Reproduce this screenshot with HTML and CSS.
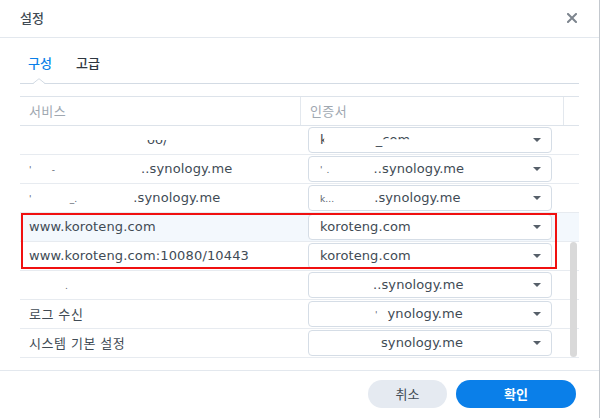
FILE: index.html
```html
<!DOCTYPE html>
<html lang="ko">
<head>
<meta charset="utf-8">
<title>설정</title>
<link rel="stylesheet" href="styles.css">
</head>
<body>
<div class="dialog">
  <div class="head">
    <span class="title">설정</span>
    <svg class="close" width="10" height="10" viewBox="0 0 10 10"><path d="M1 1 L9 9 M9 1 L1 9" stroke="#7d858e" stroke-width="2" stroke-linecap="square" fill="none"/></svg>
  </div>
  <div class="body">
    <div class="tabs">
      <span class="tab active">구성</span>
      <span class="tab">고급</span>
      <svg class="caret" width="12" height="6" viewBox="0 0 12 6"><path d="M0 6 L6 0.7 L12 6 Z" fill="#fff"/><path d="M0 5.5 L6 0.7 L12 5.5" fill="none" stroke="#d3dbe4" stroke-width="1"/></svg>
    </div>
    <div class="grid">
      <div class="ghead">
        <div class="hc1">서비스</div>
        <div class="hc2">인증서</div>
        <div class="hc3"></div>
      </div>
      <div class="rows">
        <div class="row">
          <div class="c1"><span class="frag clip-top m118">oo/</span></div>
          <div class="c2"><div class="sel"><span class="val"><span class="clip-l">k</span><span class="m48">_</span><span class="clip-bot">com</span></span><i class="arrow"></i></div></div>
          <div class="c3"></div>
        </div>
        <div class="row">
          <div class="c1"><span class="tiny">'</span><span class="tiny m20">-</span><span class="m86">..synology.me</span></div>
          <div class="c2"><div class="sel"><span class="val"><span class="tiny">'</span><span class="tiny m4">.</span><span class="m44">..synology.me</span></span><i class="arrow"></i></div></div>
          <div class="c3"></div>
        </div>
        <div class="row">
          <div class="c1"><span class="tiny">'</span><span class="tiny m38">_.</span><span class="m56">.synology.me</span></div>
          <div class="c2"><div class="sel"><span class="val"><span class="tiny">k...</span><span class="m40">.synology.me</span></span><i class="arrow"></i></div></div>
          <div class="c3"></div>
        </div>
        <div class="row hl">
          <div class="c1">www.koroteng.com</div>
          <div class="c2"><div class="sel"><span class="val">koroteng.com</span><i class="arrow"></i></div></div>
          <div class="c3"></div>
        </div>
        <div class="row">
          <div class="c1">www.koroteng.com:10080/10443</div>
          <div class="c2"><div class="sel"><span class="val">koroteng.com</span><i class="arrow"></i></div></div>
          <div class="c3"></div>
        </div>
        <div class="row">
          <div class="c1"><span class="tiny m36">.</span></div>
          <div class="c2"><div class="sel"><span class="val"><span class="m53">..synology.me</span></span><i class="arrow"></i></div></div>
          <div class="c3"></div>
        </div>
        <div class="row">
          <div class="c1 ko">로그 수신</div>
          <div class="c2"><div class="sel"><span class="val"><span class="tiny m55">'</span><span class="m10">ynology.me</span></span><i class="arrow"></i></div></div>
          <div class="c3"></div>
        </div>
        <div class="row">
          <div class="c1 ko">시스템 기본 설정</div>
          <div class="c2"><div class="sel"><span class="val"><span class="m61">synology.me</span></span><i class="arrow"></i></div></div>
          <div class="c3"></div>
        </div>
        <div class="scrollbar"></div>
      </div>
      <div class="redbox"></div>
    </div>
  </div>
  <div class="foot">
    <button class="btn cancel">취소</button>
    <button class="btn ok">확인</button>
  </div>
</div>
</body>
</html>
```
FILE: styles.css
```css
* { box-sizing: border-box; }
html, body { margin: 0; padding: 0; background: #fff; }
body {
  width: 601px;
  height: 418px;
  overflow: hidden;
  font-family: "DejaVu Sans", "Noto Sans CJK KR", sans-serif;
  font-size: 13px;
  color: #414b55;
}
.dialog {
  width: 600px;
  height: 418px;
  border-right: 1px solid #c3c8ce;
  display: flex;
  flex-direction: column;
}
.head {
  height: 38px;
  border-bottom: 1px solid #e3e8ee;
  display: flex;
  align-items: center;
  justify-content: space-between;
  padding: 0 22px 1px 20px;
}
.title {
  font-family: "Noto Sans CJK KR", sans-serif;
  font-size: 13px;
  font-weight: 500;
  line-height: 18px;
  color: #414b55;
}
.close { display: block; }
.body { padding: 0 20px; }
.tabs {
  position: relative;
  height: 46px;
  border-bottom: 1px solid #d3dbe4;
  display: flex;
  gap: 24px;
  padding: 15px 0 0 8px;
  margin-bottom: 12px;
}
.tab {
  font-family: "Noto Sans CJK KR", sans-serif;
  font-size: 13px;
  font-weight: 500;
  line-height: 20px;
  color: #2e3740;
}
.tab.active { color: #0a7fe9; }
.caret {
  position: absolute;
  left: 13px;
  bottom: -1px;
  display: block;
}
.grid { position: relative; }
.ghead {
  display: grid;
  grid-template-columns: 280px 263px 17px;
  height: 30px;
  border-top: 1px solid #dde3ea;
  border-bottom: 1px solid #dde3ea;
  font-family: "Noto Sans CJK KR", sans-serif;
  color: #a0a8b1;
  line-height: 28px;
  letter-spacing: 0.4px;
}
.hc1 { padding-left: 9px; }
.hc2 { padding-left: 9px; border-left: 1px solid #e3e8ee; }
.hc3 { border-left: 1px solid #e3e8ee; }
.rows { position: relative; }
.row {
  display: grid;
  grid-template-columns: 280px 263px 17px;
  height: 29px;
  border-bottom: 1px solid #e7ebf0;
  align-items: center;
}
.row.hl { background: #f3f8fd; }
.c1 {
  padding-left: 9px;
  white-space: nowrap;
  line-height: 16px;
  letter-spacing: 0.15px;
}
.c1.ko { font-family: "Noto Sans CJK KR", sans-serif; letter-spacing: 0.6px; }
.c2 { padding-left: 8px; }
.sel {
  width: 244px;
  height: 26px;
  border: 1px solid #d5dde6;
  border-radius: 4px;
  background: #fff;
  display: flex;
  align-items: center;
  justify-content: space-between;
  padding: 0 10px 0 11px;
}
.val { white-space: nowrap; line-height: 16px; letter-spacing: 0.1px; }
.arrow {
  display: block;
  width: 0;
  height: 0;
  border-left: 4px solid transparent;
  border-right: 4px solid transparent;
  border-top: 4px solid #565f69;
  margin-top: -1px;
}
.frag, .clip-bot, .clip-l { display: inline-block; }
.clip-top { clip-path: inset(50% 0 0 0); }
.clip-bot { clip-path: inset(0 0 55% 0); }
.clip-l { clip-path: inset(0 45% 0 0); }
.tiny { font-size: 9px; color: #5a636d; }
.m4 { margin-left: 4px; }
.m10 { margin-left: 10px; }
.m20 { margin-left: 20px; }
.m36 { margin-left: 36px; }
.m38 { margin-left: 38px; }
.m40 { margin-left: 40px; }
.m44 { margin-left: 44px; }
.m48 { margin-left: 48px; }
.m53 { margin-left: 53px; }
.m55 { margin-left: 55px; }
.m56 { margin-left: 56px; }
.m61 { margin-left: 61px; }
.m86 { margin-left: 86px; }
.m118 { margin-left: 118px; }
.scrollbar {
  position: absolute;
  left: 550px;
  top: 116px;
  width: 7px;
  height: 115px;
  border-radius: 4px;
  background: #d9d9d9;
}
.redbox {
  position: absolute;
  left: 1px;
  top: 117px;
  width: 536px;
  height: 56px;
  border: 2px solid #f01010;
}
.foot {
  margin-top: auto;
  height: 48px;
  border-top: 1px solid #e3e8ee;
  display: flex;
  justify-content: flex-end;
  gap: 9px;
  padding: 9px 23px 0 0;
}
.btn {
  height: 28px;
  border: 0;
  border-radius: 14px;
  font-family: "Noto Sans CJK KR", sans-serif;
  font-size: 13px;
  line-height: 28px;
  padding: 0;
}
.cancel { width: 79px; background: #e5eaf1; color: #414b55; }
.ok { width: 120px; background: #0a7fe9; color: #fff; font-weight: 700; }
```
